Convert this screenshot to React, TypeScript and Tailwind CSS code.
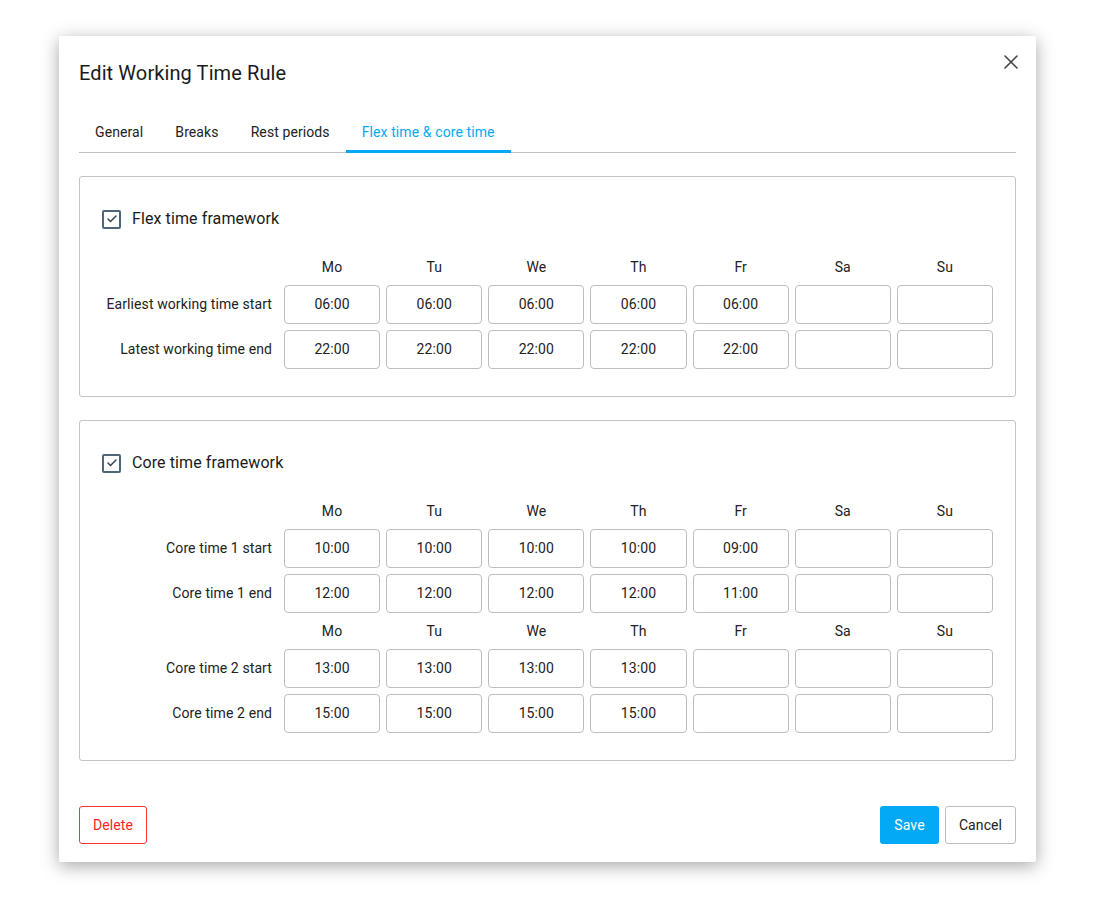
import { Check } from 'lucide-react';

const days = ['Mo', 'Tu', 'We', 'Th', 'Fr', 'Sa', 'Su'];

type Row = { label: string; values: string[] };

function DayHeader() {
  return (
    <>
      <div />
      {days.map((d) => (
        <div key={d} className="h-[24px] leading-[24px] text-center text-[14px] text-[#222]">
          {d}
        </div>
      ))}
    </>
  );
}

function TimeRow({ row }: { row: Row }) {
  return (
    <>
      <div className="h-[39px] flex items-center justify-end pr-[6px] text-[14px] text-[#222] whitespace-nowrap">
        {row.label}
      </div>
      {days.map((d, i) => (
        <div
          key={d}
          className="h-[39px] flex items-center justify-center rounded-[4px] border border-[#bdbdbd] text-[14px] text-[#222]"
        >
          {row.values[i] ?? ''}
        </div>
      ))}
    </>
  );
}

function Framework({ title, groups }: { title: string; groups: Row[][] }) {
  return (
    <div className="rounded-[3px] border border-[#c4c4c4] px-[22px] pt-[32px] pb-[27px]">
      <div className="flex items-center h-[20px]">
        <div className="w-[19px] h-[19px] rounded-[2px] border-2 border-[#4c6878] flex items-center justify-center">
          <Check className="w-[12px] h-[12px] text-[#2f4450]" strokeWidth={3} />
        </div>
        <span className="ml-[11px] text-[16px] text-[#1a1a1a]">{title}</span>
      </div>
      <div className="mt-[26px] grid grid-cols-[176px_repeat(7,minmax(0,1fr))] gap-x-[6px] gap-y-[6px]">
        {groups.map((rows, gi) => (
          <div key={gi} className="contents">
            <DayHeader />
            {rows.map((r) => (
              <TimeRow key={r.label} row={r} />
            ))}
          </div>
        ))}
      </div>
    </div>
  );
}

export default function App() {
  const tabs = ['General', 'Breaks', 'Rest periods', 'Flex time & core time'];

  return (
    <div className="min-h-[900px] bg-white font-['Roboto',sans-serif] tracking-[0.1px] pt-[36px] pl-[59px]">
      <div className="relative w-[977px] bg-white rounded-[2px] shadow-[0_4px_18px_rgba(0,0,0,0.35)] px-5 pt-[25px] pb-[18px]">
        <button className="absolute top-[19px] right-[18px] w-[14px] h-[14px]">
          <svg viewBox="0 0 14 14" width="14" height="14">
            <path d="M1 1L13 13M13 1L1 13" stroke="#444" strokeWidth="1.6" strokeLinecap="round" />
          </svg>
        </button>

        <h1 className="text-[20px] leading-[24px] text-[#1a1a1a]">Edit Working Time Rule</h1>

        <div className="mt-[25px] flex border-b border-[#bdbdbd]">
          {tabs.map((t, i) => {
            const active = i === tabs.length - 1;
            return (
              <div
                key={t}
                className={`relative px-4 pt-[12px] pb-[10px] text-[14px] leading-[20px] ${
                  active ? 'text-[#03a9f4]' : 'text-[#222]'
                }`}
              >
                {t}
                {active && <div className="absolute left-0 right-0 bottom-[-1px] h-[3px] bg-[#03a9f4]" />}
              </div>
            );
          })}
        </div>

        <div className="mt-[23px] flex flex-col gap-[23px]">
          <Framework
            title="Flex time framework"
            groups={[
              [
                { label: 'Earliest working time start', values: ['06:00', '06:00', '06:00', '06:00', '06:00'] },
                { label: 'Latest working time end', values: ['22:00', '22:00', '22:00', '22:00', '22:00'] },
              ],
            ]}
          />
          <Framework
            title="Core time framework"
            groups={[
              [
                { label: 'Core time 1 start', values: ['10:00', '10:00', '10:00', '10:00', '09:00'] },
                { label: 'Core time 1 end', values: ['12:00', '12:00', '12:00', '12:00', '11:00'] },
              ],
              [
                { label: 'Core time 2 start', values: ['13:00', '13:00', '13:00', '13:00'] },
                { label: 'Core time 2 end', values: ['15:00', '15:00', '15:00', '15:00'] },
              ],
            ]}
          />
        </div>

        <div className="mt-[45px] flex items-center">
          <button className="w-[68px] h-[38px] rounded-[3px] border border-[#ff3333] text-[#ff1f1f] text-[14px]">
            Delete
          </button>
          <div className="ml-auto flex gap-[6px]">
            <button className="w-[59px] h-[38px] rounded-[3px] bg-[#03a9f4] text-white text-[14px]">Save</button>
            <button className="w-[71px] h-[38px] rounded-[3px] border border-[#bdbdbd] text-[#222] text-[14px]">
              Cancel
            </button>
          </div>
        </div>
      </div>
    </div>
  );
}
